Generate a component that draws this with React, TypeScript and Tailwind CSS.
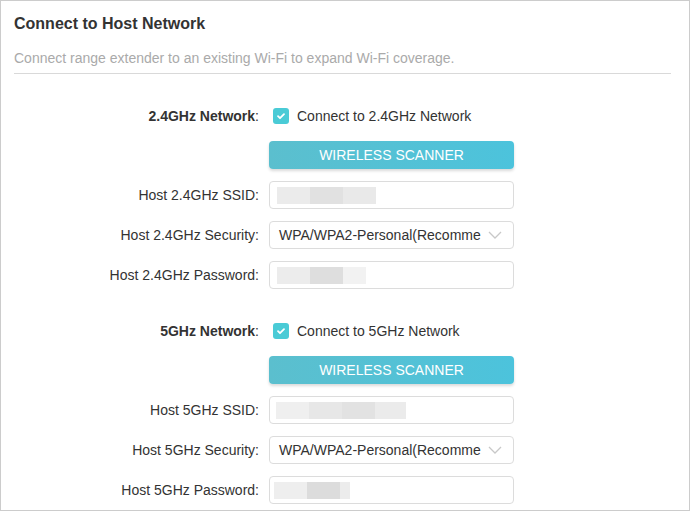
import React from 'react';

type Block = { w: number; c: string };

const Blur = ({ blocks, offset = 7 }: { blocks: Block[]; offset?: number }) => (
  <div className="flex h-[17px]" style={{ marginLeft: offset }}>
    {blocks.map((b, i) => (
      <div key={i} className="h-full" style={{ width: b.w, background: b.c }} />
    ))}
  </div>
);

const Row = ({ label, children, bold }: { label?: string; children: React.ReactNode; bold?: boolean }) => (
  <div className={`flex items-center h-[28px] ${bold ? 'pt-[2px]' : ''}`}>
    <div className="w-[258px] text-right text-[14px] text-[#333] whitespace-nowrap">
      {label ? (
        bold ? (
          <>
            <span className="font-bold">{label}</span>:
          </>
        ) : (
          <>{label}:</>
        )
      ) : null}
    </div>
    <div className="ml-[10px] w-[245px] h-full flex items-center">{children}</div>
  </div>
);

const Checkbox = ({ text }: { text: string }) => (
  <div className="flex items-center">
    <div className="ml-[4px] w-[16px] h-[16px] rounded-[3px] bg-[#4acbd6] flex items-center justify-center">
      <svg width="10" height="10" viewBox="0 0 10 10" fill="none">
        <path d="M2 5.2l2 2 4-4" stroke="white" strokeWidth="1.8" strokeLinecap="round" strokeLinejoin="round" />
      </svg>
    </div>
    <span className="ml-[8px] text-[14px] text-[#333] whitespace-nowrap">{text}</span>
  </div>
);

const Scanner = () => (
  <button className="w-full h-[28px] rounded-[4px] bg-gradient-to-r from-[#5bbfce] to-[#4cc3dc] text-white text-[14px] shadow-[0_2px_3px_rgba(0,0,0,0.15)]">
    WIRELESS SCANNER
  </button>
);

const Field = ({ children }: { children?: React.ReactNode }) => (
  <div className="w-full h-full border border-[#dcdcdc] rounded-[4px] bg-white flex items-center">{children}</div>
);

const Select = () => (
  <div className="w-full h-full border border-[#dcdcdc] rounded-[4px] bg-white flex items-center justify-between pl-[9px] pr-[11px]">
    <span className="text-[14px] text-[#333] whitespace-nowrap">WPA/WPA2-Personal(Recomme</span>
    <svg width="14" height="8" viewBox="0 0 14 8" fill="none" className="ml-[4px] shrink-0">
      <path d="M1 1l6 6 6-6" stroke="#c8c8c8" strokeWidth="1.3" />
    </svg>
  </div>
);

const App = () => {
  return (
    <div
      className="w-[690px] h-[511px] border border-[#cccccc] bg-white overflow-hidden"
      style={{ fontFamily: '"Liberation Sans", Arial, sans-serif' }}
    >
      <div className="px-[13px] pt-[13px]">
        <h1 className="text-[16px] leading-[20px] font-bold text-[#333]">Connect to Host Network</h1>
        <p className="mt-[14px] text-[14px] leading-[20px] text-[#aaaaaa]">
          Connect range extender to an existing Wi-Fi to expand Wi-Fi coverage.
        </p>
        <div className="mt-[5px] h-px bg-[#d9d9d9] mr-[5px]" />
      </div>

      <div className="mt-[27px] flex flex-col gap-[12px]">
        <Row label="2.4GHz Network" bold>
          <Checkbox text="Connect to 2.4GHz Network" />
        </Row>
        <Row>
          <Scanner />
        </Row>
        <Row label="Host 2.4GHz SSID">
          <Field>
            <Blur blocks={[{ w: 33, c: '#ebebeb' }, { w: 33, c: '#e1e1e1' }, { w: 33, c: '#e9e9e9' }]} />
          </Field>
        </Row>
        <Row label="Host 2.4GHz Security">
          <Select />
        </Row>
        <Row label="Host 2.4GHz Password">
          <Field>
            <Blur blocks={[{ w: 33, c: '#ececec' }, { w: 33, c: '#dedede' }, { w: 23, c: '#f2f2f2' }]} />
          </Field>
        </Row>
      </div>

      <div className="mt-[27px] flex flex-col gap-[12px]">
        <Row label="5GHz Network" bold>
          <Checkbox text="Connect to 5GHz Network" />
        </Row>
        <Row>
          <Scanner />
        </Row>
        <Row label="Host 5GHz SSID">
          <Field>
            <Blur
              offset={6}
              blocks={[{ w: 33, c: '#efefef' }, { w: 33, c: '#e7e7e7' }, { w: 33, c: '#e2e2e2' }, { w: 31, c: '#ebebeb' }]}
            />
          </Field>
        </Row>
        <Row label="Host 5GHz Security">
          <Select />
        </Row>
        <Row label="Host 5GHz Password">
          <Field>
            <Blur offset={4} blocks={[{ w: 33, c: '#eeeeee' }, { w: 33, c: '#dcdcdc' }, { w: 10, c: '#ececec' }]} />
          </Field>
        </Row>
      </div>
    </div>
  );
};

export default App;
